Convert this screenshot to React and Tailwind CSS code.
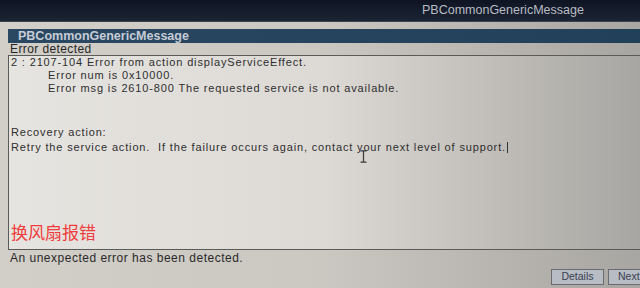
export default function App() {
  const f = { fontFamily: '"Liberation Sans", Arial, sans-serif' };
  return (
    <div className="relative w-[640px] h-[288px] overflow-hidden flex flex-col bg-[#c4c0ba] text-[#2a2a2a]" style={f}>
      <div className="h-[22px] shrink-0 bg-gradient-to-b from-[#0e1422] to-[#1c2434] flex items-center border-b border-[#3a4250]">
        <div className="pl-[422px] text-[12.5px] text-[#b8bcc4]">PBCommonGenericMessage</div>
      </div>
      <div className="flex-1 flex flex-col pl-[8px] pt-[7px] bg-gradient-to-r from-[#d2cec8] via-[#cbc7c1] to-[#a8a6a2] overflow-hidden">
        <div className="h-[14px] bg-gradient-to-r from-[#2a4862] to-[#22405a] flex items-center pl-[10px] text-[12.5px] font-bold text-[#c6ccd6] leading-none">
          PBCommonGenericMessage
        </div>
        <div className="h-[12px] flex items-center pl-[2px] text-[12px] leading-none tracking-[0.4px] text-[#262626]">Error detected</div>
        <div className="h-[195px] border-t border-l border-b border-[#5a5a58] bg-gradient-to-r from-[#e6e4e0] via-[#dddad6] to-[#a8a6a2] flex flex-col pl-[2px] text-[11px] tracking-[0.85px] leading-[13px] text-[#2e2e2e]">
          <div>2 : 2107-104 Error from action displayServiceEffect.</div>
          <div className="pl-[37px]">Error num is 0x10000.</div>
          <div className="pl-[37px]">Error msg is 2610-800 The requested service is not available.</div>
          <div className="h-[31px]" />
          <div>Recovery action:</div>
          <div className="mt-[2px] flex items-center">
            <span>Retry the service action.&nbsp; If the failure occurs again, contact your next level of support.</span>
            <span className="inline-block w-[1px] h-[11px] bg-[#333] ml-[1px]" />
          </div>
          <div className="flex-1" />
          <div className="text-[17px] leading-[22px] tracking-normal text-[#f03c3c] mb-[6px]" style={{ fontFamily: '"Noto Sans CJK SC", sans-serif' }}>换风扇报错</div>
        </div>
        <div className="pl-[2px] pt-[1px] text-[12px] leading-[14px] tracking-[0.5px] text-[#2a2a2a]">An unexpected error has been detected.</div>
        <div className="flex-1 flex items-start pt-[4px] gap-[4px] pl-[543px]">
          <div className="w-[53px] shrink-0 h-[16px] border border-[#6a6c70] bg-[#b8bcc4] flex items-center justify-center text-[10.5px] text-[#3a4050]">Details</div>
          <div className="w-[44px] shrink-0 h-[16px] border border-[#6a6c70] bg-[#b8bcc4] flex items-center pl-[9px] text-[10.5px] text-[#3a4050]">Next</div>
        </div>
      </div>
      <svg className="absolute left-[360px] top-[150px]" width="7" height="13" viewBox="0 0 7 13">
        <path d="M0.5 0.8 H6.5 M3.5 0.8 V12.2 M0.5 12.2 H6.5" stroke="#3a3a3a" strokeWidth="1.2" fill="none" />
      </svg>
    </div>
  );
}
